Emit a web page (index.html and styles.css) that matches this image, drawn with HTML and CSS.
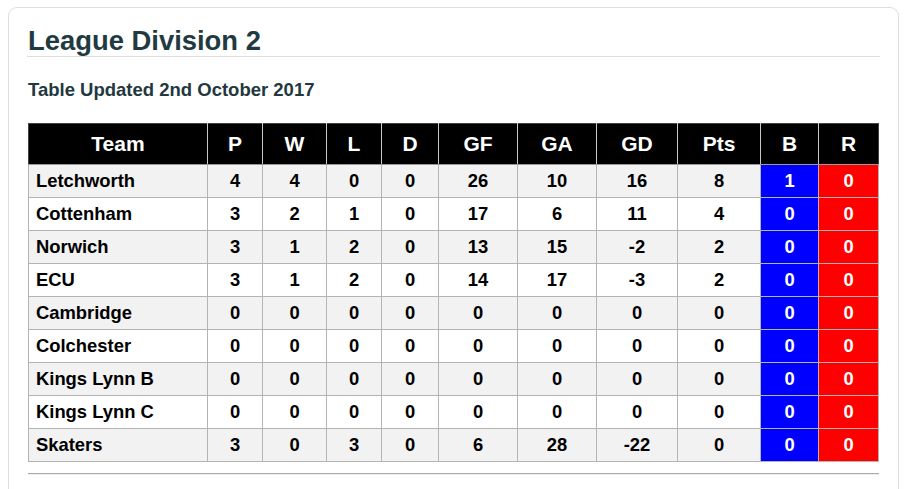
FILE: index.html
```html
<!DOCTYPE html>
<html>
<head>
<meta charset="utf-8">
<link rel="stylesheet" href="styles.css">
</head>
<body>
<div class="card">
  <h2 class="title">League Division 2</h2>
  <p class="updated">Table Updated 2nd October 2017</p>
  <table class="league">
    <colgroup>
      <col class="c-team"><col class="c-p"><col class="c-w"><col class="c-l"><col class="c-d"><col class="c-gf"><col class="c-ga"><col class="c-gd"><col class="c-pts"><col class="c-b"><col class="c-r">
    </colgroup>
    <thead>
      <tr><th>Team</th><th>P</th><th>W</th><th>L</th><th>D</th><th>GF</th><th>GA</th><th>GD</th><th>Pts</th><th>B</th><th>R</th></tr>
    </thead>
    <tbody>
      <tr><td class="team">Letchworth</td><td>4</td><td>4</td><td>0</td><td>0</td><td>26</td><td>10</td><td>16</td><td>8</td><td class="blue">1</td><td class="red">0</td></tr>
      <tr><td class="team">Cottenham</td><td>3</td><td>2</td><td>1</td><td>0</td><td>17</td><td>6</td><td>11</td><td>4</td><td class="blue">0</td><td class="red">0</td></tr>
      <tr><td class="team">Norwich</td><td>3</td><td>1</td><td>2</td><td>0</td><td>13</td><td>15</td><td>-2</td><td>2</td><td class="blue">0</td><td class="red">0</td></tr>
      <tr><td class="team">ECU</td><td>3</td><td>1</td><td>2</td><td>0</td><td>14</td><td>17</td><td>-3</td><td>2</td><td class="blue">0</td><td class="red">0</td></tr>
      <tr><td class="team">Cambridge</td><td>0</td><td>0</td><td>0</td><td>0</td><td>0</td><td>0</td><td>0</td><td>0</td><td class="blue">0</td><td class="red">0</td></tr>
      <tr><td class="team">Colchester</td><td>0</td><td>0</td><td>0</td><td>0</td><td>0</td><td>0</td><td>0</td><td>0</td><td class="blue">0</td><td class="red">0</td></tr>
      <tr><td class="team">Kings Lynn B</td><td>0</td><td>0</td><td>0</td><td>0</td><td>0</td><td>0</td><td>0</td><td>0</td><td class="blue">0</td><td class="red">0</td></tr>
      <tr><td class="team">Kings Lynn C</td><td>0</td><td>0</td><td>0</td><td>0</td><td>0</td><td>0</td><td>0</td><td>0</td><td class="blue">0</td><td class="red">0</td></tr>
      <tr><td class="team">Skaters</td><td>3</td><td>0</td><td>3</td><td>0</td><td>6</td><td>28</td><td>-22</td><td>0</td><td class="blue">0</td><td class="red">0</td></tr>
    </tbody>
  </table>
  <hr class="rule">
</div>
</body>
</html>
```

FILE: styles.css
```css
html, body {
  margin: 0;
  padding: 0;
  background: #ffffff;
}
body {
  padding: 7px 11px 0 8px;
  font-family: "Liberation Sans", Arial, sans-serif;
  overflow: hidden;
}
.card {
  border: 1px solid #dddddd;
  border-bottom: none;
  border-radius: 9px 9px 0 0;
  padding: 18px 19px 40px 19px;
  height: 500px;
  box-sizing: border-box;
}
.title {
  margin: 0 -1px 0 -1px;
  font-size: 27.4px;
  font-weight: bold;
  color: #1f3a41;
  line-height: 30px;
  border-bottom: 1px solid #dedede;
  padding: 0 0 0 1px;
}
.updated {
  margin: 22px 0 0 0;
  font-size: 18.5px;
  font-weight: bold;
  color: #23383e;
  line-height: 21px;
}
.league {
  margin-top: 23px;
  width: 851px;
  border-collapse: collapse;
  table-layout: fixed;
  font-size: 18.4px;
  font-weight: bold;
  color: #000;
}
.c-team { width: 179px; }
.c-p { width: 55px; }
.c-w { width: 64px; }
.c-l { width: 55px; }
.c-d { width: 57px; }
.c-gf { width: 79px; }
.c-ga { width: 79px; }
.c-gd { width: 81px; }
.c-pts { width: 83px; }
.c-b { width: 58px; }
.c-r { width: 60px; }
.league th {
  background: #000;
  color: #fff;
  font-size: 21px;
  height: 40px;
  padding: 0;
  border: 1px solid #c8c8c8;
  border-top-color: #444;
  border-bottom-color: #999;
  text-align: center;
}
.league th:first-child { border-left-color: #444; }
.league th:last-child { border-right-color: #444; }
.league td {
  height: 32px;
  padding: 0;
  border: 1px solid #b4b4b4;
  text-align: center;
}
.league tbody tr:nth-child(odd) td { background: #f2f2f2; }
.league tbody tr:nth-child(even) td { background: #ffffff; }
.league td.team {
  text-align: left;
  padding-left: 7px;
}
.league tbody tr td.blue { background: #0000ff; color: #fff; }
.league tbody tr td.red { background: #ff0000; color: #fff; }
.rule {
  margin: 11px 0 0 0;
  width: 851px;
  border: none;
  border-top: 1px solid #aaaaaa;
  border-bottom: 1px solid #eeeeee;
  height: 0;
}
```
